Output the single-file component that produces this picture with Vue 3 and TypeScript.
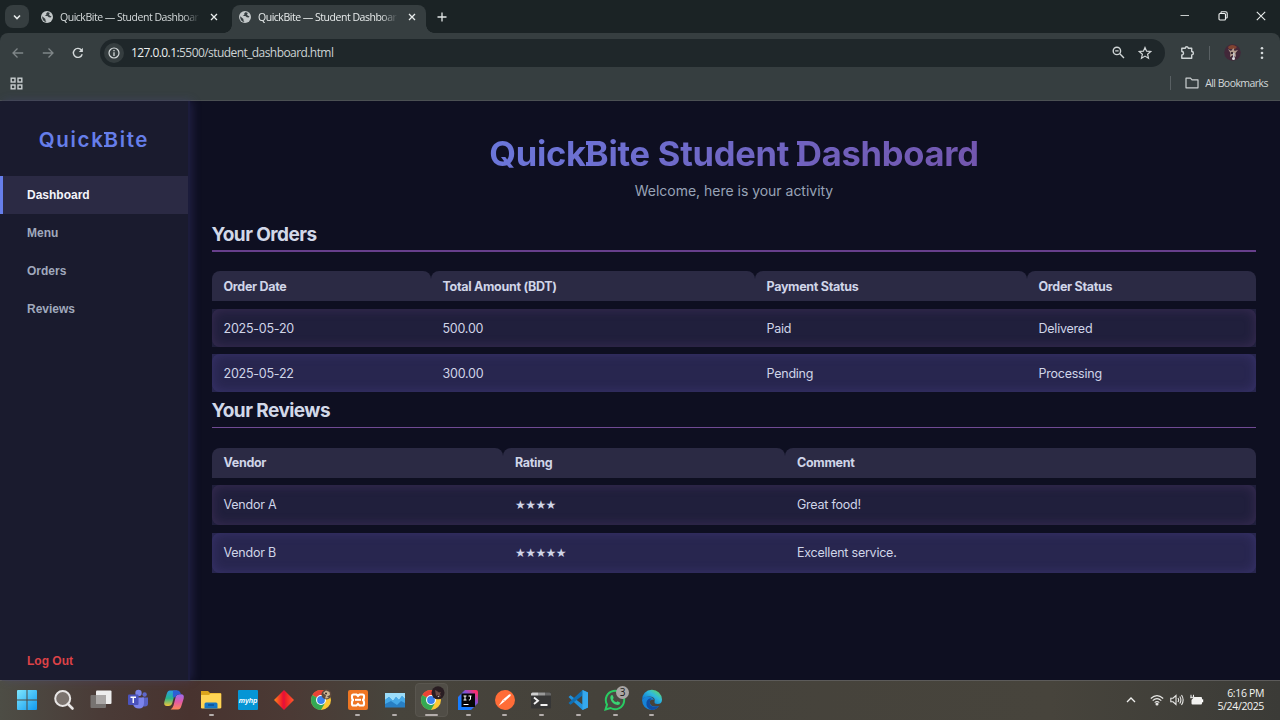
<script setup lang="ts">
interface Table {
  title: string
  kind: string
  head: string[]
  rows: string[][]
}

const nav: string[] = ['Dashboard', 'Menu', 'Orders', 'Reviews']

const tables: Table[] = [
  {
    title: 'Your Orders',
    kind: 'orders',
    head: ['Order Date', 'Total Amount (BDT)', 'Payment Status', 'Order Status'],
    rows: [
      ['2025-05-20', '500.00', 'Paid', 'Delivered'],
      ['2025-05-22', '300.00', 'Pending', 'Processing'],
    ],
  },
  {
    title: 'Your Reviews',
    kind: 'reviews',
    head: ['Vendor', 'Rating', 'Comment'],
    rows: [
      ['Vendor A', '★★★★', 'Great food!'],
      ['Vendor B', '★★★★★', 'Excellent service.'],
    ],
  },
]

interface App {
  id: string
  running?: boolean
  active?: boolean
}

const apps: App[] = [
  { id: 'start' },
  { id: 'search' },
  { id: 'tasks' },
  { id: 'teams' },
  { id: 'copilot' },
  { id: 'files', running: true },
  { id: 'myhp' },
  { id: 'diamond' },
  { id: 'chrome' },
  { id: 'xampp', running: true },
  { id: 'monitor', running: true },
  { id: 'chrome2', running: true, active: true },
  { id: 'idea', running: true },
  { id: 'postman', running: true },
  { id: 'terminal', running: true },
  { id: 'vscode', running: true },
  { id: 'whatsapp', running: true },
  { id: 'edge', running: true },
]
</script>

<template>
  <div class="screen">
    <header class="browser">
      <div class="tabstrip">
        <div class="tabsearch">
          <svg width="10" height="10" viewBox="0 0 10 10"><path d="M2 3.5 5 6.5 8 3.5" fill="none" stroke="#e6eaea" stroke-width="1.6" /></svg>
        </div>
        <div v-for="n in 2" :key="n" class="tab" :class="{ current: n === 2 }">
          <svg class="globe" width="12" height="12" viewBox="0 0 12 12">
            <circle cx="6" cy="6" r="6" fill="#c3c8c9" />
            <path d="M1.2 5.2 4.4 8v1.2l1 1.6C2.800 10.800 1 8.600 1.200 5.200zM6.300 1.300 5.200 2.500 5.400 3.800 3.800 5h2.600l1.400 1.300 1.800.2.900-1L8.600 4.600 8 3.100 9 2.200C8.200 1.500 7.300 1.200 6.300 1.300z" fill="#363e41" />
          </svg>
          <span class="tabtitle">QuickBite — Student Dashboard</span>
          <svg class="tabclose" width="8" height="8" viewBox="0 0 8 8"><path d="M1 1 7 7M7 1 1 7" stroke="#e8ecec" stroke-width="1.3" /></svg>
        </div>
        <svg class="newtab" width="10" height="10" viewBox="0 0 10 10"><path d="M5 .5v9M.5 5h9" stroke="#e3e7e7" stroke-width="1.3" /></svg>
        <div class="winbtns">
          <svg width="10" height="10" viewBox="0 0 10 10"><path d="M.5 4.500h8.500" stroke="#c8cccc" stroke-width="1" /></svg>
          <svg width="10" height="10" viewBox="0 0 10 10" fill="none" stroke="#f0f3f3" stroke-width="1.100"><rect x="1" y="2.500" width="6.500" height="6.500" rx="1" /><path d="M3 2V1.600Q3 .8 3.800.8H7.500Q9.200.8 9.200 2.500V6.200Q9.200 7 8.400 7H8" /></svg>
          <svg width="10" height="10" viewBox="0 0 10 10"><path d="M.8.8 9.200 9.200M9.200.8.8 9.200" stroke="#e8ecec" stroke-width="1.100" /></svg>
        </div>
      </div>
      <div class="toolbar">
        <svg class="nav-ic" width="12" height="12" viewBox="0 0 12 12"><path d="M11.200 6H1.200M5.500 1.500 1 6l4.500 4.500" fill="none" stroke="#7f8688" stroke-width="1.300" /></svg>
        <svg class="nav-ic" width="12" height="12" viewBox="0 0 12 12"><path d="M.8 6h10M6.500 1.500 11 6l-4.500 4.500" fill="none" stroke="#7f8688" stroke-width="1.300" /></svg>
        <svg class="nav-ic" width="12" height="12" viewBox="0 0 12 12"><path d="M10.200 7.200A4.500 4.500 0 1 1 9.500 3.200" fill="none" stroke="#d5dadb" stroke-width="1.400" /><path d="M10.900.8V5H6.800z" fill="#d5dadb" /></svg>
        <div class="omnibox">
          <div class="info">
            <svg width="12" height="12" viewBox="0 0 12 12"><circle cx="6" cy="6" r="5" fill="none" stroke="#d5dadb" stroke-width="1.200" /><path d="M6 5.300V9M6 3v1.300" stroke="#d5dadb" stroke-width="1.300" /></svg>
          </div>
          <span class="url"><b>127.0.0.1:</b>5500/student_dashboard.html</span>
          <svg class="zoomout" width="13" height="13" viewBox="0 0 13 13" fill="none" stroke="#d0d5d6" stroke-width="1.400"><circle cx="4.900" cy="4.900" r="3.700" /><path d="M7.800 7.800 12 12M3.200 4.900h3.400" /></svg>
          <svg class="bookmark" width="14" height="14" viewBox="0 0 14 14"><path d="M7 1.500 8.600 5.200 12.700 5.500 9.600 8.200 10.500 12.200 7 10.100 3.500 12.200 4.400 8.200 1.300 5.500 5.400 5.200z" fill="none" stroke="#d0d5d6" stroke-width="1.200" /></svg>
        </div>
        <svg class="puzzle" width="15" height="15" viewBox="0 0 15 15"><path d="M1.800 3.200H5.300A1.500 1.500 0 0 1 8.300 3.200H11.700V6.500A1.700 1.700 0 0 1 11.700 9.900V13.300H1.800V10A1.700 1.700 0 0 0 1.800 6.500z" fill="none" stroke="#d0d5d6" stroke-width="1.400" stroke-linejoin="round" /></svg>
        <i class="divider" />
        <svg class="avatar" width="17" height="17" viewBox="0 0 17 17">
          <circle cx="8.500" cy="8.500" r="8.300" fill="#422839" />
          <path d="M4 3Q8-1 13 3L11 5H5z" fill="#804331" /><path d="M4 5 7 7 9.500 4 10.500 7 14 6 11.500 9 12 13 9 11 6 13 6.500 9z" fill="#b39c8e" /><path d="M7 8h2v2H7z" fill="#3b2a32" /><circle cx="9.500" cy="14.500" r="1.500" fill="#dedde2" /><path d="M9 9h1.500v5H9z" fill="#c5c5ca" />
        </svg>
        <svg class="dots" width="4" height="14" viewBox="0 0 4 14" fill="#d5dadb"><circle cx="2" cy="2.300" r="1.300" /><circle cx="2" cy="7" r="1.300" /><circle cx="2" cy="11.700" r="1.300" /></svg>
      </div>
      <div class="bookmarks">
        <svg width="13" height="13" viewBox="0 0 13 13" fill="none" stroke="#c8cecf" stroke-width="1.400"><rect x="1.200" y="1.200" width="3.800" height="3.800" /><rect x="8" y="1.200" width="3.800" height="3.800" /><rect x="1.200" y="8" width="3.800" height="3.800" /><rect x="8" y="8" width="3.800" height="3.800" /></svg>
        <i class="divider bm" />
        <svg class="folder" width="14" height="12" viewBox="0 0 14 12"><path d="M1 1.200H5.500L7 2.800H13V10.800H1z" fill="none" stroke="#cbd0d1" stroke-width="1.200" stroke-linejoin="round" /></svg>
        <span class="allbm">All Bookmarks</span>
      </div>
    </header>

    <div class="page">
      <aside class="sidebar">
        <div class="brand">Quick<span class="slab">B</span>ite</div>
        <nav>
          <a v-for="(item, i) in nav" :key="item" :class="{ on: i === 0 }">{{ item }}</a>
        </nav>
        <a class="logout">Log Out</a>
      </aside>
      <main>
        <h1><span class="grad">Quick<span class="slab">B</span>ite Student <span class="slab late">D</span>ashboard</span></h1>
        <p class="welcome">Welcome, here is your activity</p>
        <section v-for="t in tables" :key="t.kind" :class="t.kind">
          <h2>{{ t.title }}</h2>
          <div class="row head">
            <div v-for="h in t.head" :key="h">{{ h }}</div>
          </div>
          <div v-for="r in t.rows" :key="r[0]" class="row body">
            <div v-for="c in r" :key="c" :class="{ stars: c[0] === '★' }">{{ c }}</div>
          </div>
        </section>
      </main>
    </div>

    <footer class="taskbar">
      <div class="apps">
        <div v-for="a in apps" :key="a.id" class="app" :class="{ running: a.running, active: a.active }">
          <svg width="24" height="24" viewBox="0 0 24 24">
            <defs>
              <linearGradient id="gWin" x1="0" y1="0" x2="1" y2="1"><stop offset="0" stop-color="#7ee6fd" /><stop offset="1" stop-color="#119af0" /></linearGradient>
              <linearGradient id="gDia"><stop offset="0" stop-color="#ff8a1c" /><stop offset=".42" stop-color="#f0182c" /><stop offset=".5" stop-color="#e01040" /><stop offset=".58" stop-color="#ee1f26" /><stop offset="1" stop-color="#ff5a2e" /></linearGradient>
              <linearGradient id="gCop1" x1="0" y1="0" x2="0" y2="1"><stop offset="0" stop-color="#2a9de8" /><stop offset=".5" stop-color="#27b58c" /><stop offset="1" stop-color="#f3c63a" /></linearGradient>
              <linearGradient id="gCop2" x1="0" y1="0" x2="0" y2="1"><stop offset="0" stop-color="#9b6cf0" /><stop offset=".5" stop-color="#e25aa5" /><stop offset="1" stop-color="#ff8a55" /></linearGradient>
              <linearGradient id="gIdea" x1="0" y1="1" x2="1" y2="0"><stop offset=".3" stop-color="#167dff" /><stop offset=".65" stop-color="#8a4fd0" /><stop offset=".9" stop-color="#fe2d6c" /></linearGradient>
              <linearGradient id="gEdge" x1="0" y1="1" x2="1" y2="0"><stop offset=".2" stop-color="#0d78d2" /><stop offset=".6" stop-color="#2fb9dd" /><stop offset=".9" stop-color="#61d764" /></linearGradient>
            </defs>
            <g v-if="a.id === 'start'" fill="url(#gWin)"><path d="M2 3Q2 2 3 2H11.500V11.500H2zM12.500 2H21Q22 2 22 3V11.500H12.500zM2 12.500H11.500V22H3Q2 22 2 21zM12.500 12.500H22V21Q22 22 21 22H12.500z" /></g>
            <g v-else-if="a.id === 'search'" fill="#7b736e" stroke="#e8e6e5" stroke-width="2"><circle cx="10.700" cy="10.500" r="7.500" /><path d="M16 16 20.500 20.500" stroke-width="2.600" stroke-linecap="round" /></g>
            <g v-else-if="a.id === 'tasks'"><rect x="7" y="2.500" width="15.500" height="13.500" rx="1" fill="#ededed" /><rect x="1.500" y="7" width="15.500" height="13" rx="1" fill="#777371" /><path d="M7 7h10v9H7z" fill="#aaa7a6" /></g>
            <g v-else-if="a.id === 'teams'"><circle cx="12.500" cy="5" r="3.200" fill="#7a83e8" /><circle cx="18.600" cy="6.500" r="2.200" fill="#5e67c9" /><path d="M16 9.500h6v6q0 3-3 3h-3z" fill="#5961c4" /><path d="M7 9.500H18V15Q18 20.500 13 20.500Q8 20.500 7 16z" fill="#7b83eb" /><rect x="2" y="6.500" width="10.500" height="10.500" rx="1" fill="#4b53bc" /><path d="M4.500 9.200h5.500M7.250 9.200v5.800" stroke="#fff" stroke-width="1.400" /></g>
            <g v-else-if="a.id === 'copilot'"><path d="M8 2.500H15.500Q13.500 3.500 12.500 6.500L10.300 15Q9.500 18 6.500 18H5Q1.500 18 2.300 14L4.500 6.500Q5.500 2.500 8 2.500z" fill="url(#gCop1)" /><path d="M16 21.500H8.500Q10.500 20.500 11.500 17.500L13.700 9Q14.500 6.300 17.500 6.300H19Q22.500 6.300 21.700 10.500L19.500 17.500Q18.500 21.500 16 21.500z" fill="url(#gCop2)" /><path d="M11 2.500H15.500Q18 2.500 19 6.300H17Q14 6.800 13.200 9.500L10.800 9z" fill="#2b60d5" /></g>
            <g v-else-if="a.id === 'files'"><path d="M2 3H9L11 5H21Q22.200 5 22.200 6V20H2z" fill="#dca51c" /><path d="M2 7H10L11.500 5.500H22.200V19.500Q22.200 20.500 21 20.500H3Q2 20.500 2 19.500z" fill="#ffd454" /><path d="M5.500 20.500V16Q5.500 14.500 7 14.500H17Q18.500 14.500 18.500 16V20.500z" fill="#1676c4" /><path d="M9 17h6" stroke="#0c4d91" stroke-width="1.400" /></g>
            <g v-else-if="a.id === 'myhp'"><rect x="2" y="2" width="20" height="20" rx="1" fill="#0595d5" /><text x="12" y="14.500" class="hp">myhp</text></g>
            <path v-else-if="a.id === 'diamond'" d="M12 2 22 12 12 22 2 12z" fill="url(#gDia)" />
            <g v-else-if="a.id === 'chrome' || a.id === 'chrome2'">
              <circle cx="12" cy="12" r="10" fill="#fcc934" /><path d="M12 12 3.340 7A10 10 0 0 1 20.660 7H12z" fill="#ea4335" /><path d="M12 12 3.340 7A10 10 0 0 0 12 22L16.300 14.500z" fill="#34a853" /><circle cx="12" cy="12" r="5" fill="#fff" /><circle cx="12" cy="12" r="3.900" fill="#3a82ee" />
              <g v-if="a.id === 'chrome'"><circle cx="17.500" cy="6.500" r="5" fill="#5b493e" /><path d="M14 5 17 2.500 20.500 4 21 7 18 8.500 20 10 16 10.500 17 7.500z" fill="#ccb494" /><circle cx="17" cy="5.500" r="1" fill="#352b27" /></g>
              <g v-else><circle cx="19" cy="4.800" r="6.500" fill="#291d22" /><path d="M16 2 18 3 20 4.500 22 4 21 6 22 8.500 19 7 17 8z" fill="#6b4b45" /><circle cx="19.500" cy="8.500" r=".8" fill="#c1b8ba" /></g>
            </g>
            <g v-else-if="a.id === 'xampp'"><rect x="2" y="2" width="20" height="20" rx="2" fill="#ef7623" /><path d="M7.500 6.500H10.500L12 8 13.500 6.500H16.500Q18 6.500 18 8V9.500Q18 12 16 12Q18 12 18 14.500V16Q18 17.500 16.500 17.500H13.500L12 16 10.500 17.500H7.500Q6 17.500 6 16V14.500Q6 12 8 12Q6 12 6 9.500V8Q6 6.500 7.500 6.500z" fill="none" stroke="#fff" stroke-width="2.100" /><path d="M9 11.800h6" stroke="#fff" stroke-width="2" /></g>
            <g v-else-if="a.id === 'monitor'"><path d="M2 5H22V19.500H2z" fill="#287fc4" /><path d="M2 5H22V11L19 8 16 12 13 9 10 13 6 9 2 12z" fill="#9bdcf9" /><path d="M2 12 6 9 10 13 13 9 16 12 19 8 22 11V15L18 13 14 17 8 13 2 16z" fill="#45a9e8" /></g>
            <g v-else-if="a.id === 'idea'"><path d="M2 9 9 2H20Q22 2 22 4V15L15 22H2z" fill="url(#gIdea)" /><rect x="5.500" y="5.500" width="13.500" height="13.500" fill="#050507" /><path d="M7.500 8h3M9 8v4M7.500 12h3M12.500 8h3M14.500 8v3.200q0 1-1.700.8M7.500 16.500h5" stroke="#fff" stroke-width="1" fill="none" /></g>
            <g v-else-if="a.id === 'postman'"><circle cx="12" cy="12" r="10" fill="#ff6c37" /><path d="M5.500 18 10 11.500 16 6.500Q18.500 5.500 17.500 8L11.500 13.500z" fill="#fff" /><path d="M10 11.500 12 13.500" stroke="#ff6c37" stroke-width=".7" /></g>
            <g v-else-if="a.id === 'terminal'"><rect x="2" y="4.500" width="20" height="16" rx="1" fill="#363636" /><path d="M2 7.500V6Q2 4.500 3.500 4.500H9V7.500z" fill="#cfcfcf" /><path d="M9 4.500h7v3H9z" fill="#999" /><path d="M16 4.500h4.500Q22 4.500 22 6v1.500h-6z" fill="#666" /><path d="M5 9.500 9 12.700 5 16M11.500 17h7" fill="none" stroke="#f2f2f2" stroke-width="1.900" /></g>
            <g v-else-if="a.id === 'vscode'"><path d="M16.500 2 22 4.500V19.500L16.500 22 2.500 9 4.500 7.300 16.500 16.500z" fill="#2292dc" /><path d="M16.500 2V7.500L4.500 16.700 2.500 15z" fill="#0f70b6" /><path d="M16.500 2 22 4.500V19.500L16.500 22z" fill="#35a8ee" /></g>
            <g v-else-if="a.id === 'whatsapp'"><path d="M2.500 21.500 4 16.500A9.200 9.200 0 1 1 7.500 20z" fill="#4a4942" stroke="#29cc62" stroke-width="2" /><path d="M8 7.500Q9.500 6.500 10 8L10.700 10 9.800 11.200Q11 13.500 13.300 14.300L14.500 13.300 17 14.500Q17 17 14.500 17Q8.500 16 7.300 10Q7.200 8.500 8 7.500z" fill="#39d373" /><circle cx="19.500" cy="4.500" r="6.500" fill="#a8a5a4" /><text x="19.500" y="8" class="badge">3</text></g>
            <g v-else><path d="M2 12A10 10 0 0 1 22 11.500Q22 16 17.500 16Q14 16 14.500 13.500Q15.500 10 11.500 8.800Q6 7.500 2 12z" fill="url(#gEdge)" /><path d="M2 12Q5 7.800 10 8.800Q13.500 9.500 13.800 12Q10 10.500 9.800 14.500Q10.500 20 19 18Q16 22 11.500 22Q2.500 21 2 12z" fill="#1683d8" /><path d="M9.800 14.500Q9.500 20 19 18.300Q16 22 11.500 22Q5.500 20 6.500 14Q7.500 10.500 11.500 10.200Q9.800 12 9.800 14.500z" fill="#114da2" /></g>
          </svg>
        </div>
      </div>
      <div class="tray">
        <svg width="10" height="8" viewBox="0 0 10 8"><path d="M1 6 5 2 9 6" fill="none" stroke="#f0f0ee" stroke-width="1.300" /></svg>
        <svg class="wifi" width="14" height="12" viewBox="0 0 14 12" fill="none" stroke="#e8e8e6" stroke-width="1.100"><path d="M.8 4.500Q7-1.200 13.200 4.500M2.700 6.600Q7 2.700 11.300 6.600M4.700 8.600Q7 6.400 9.300 8.600" /><circle cx="7" cy="10" r="1" fill="#fff" /></svg>
        <svg class="sound" width="14" height="12" viewBox="0 0 14 12" fill="none" stroke="#e8e8e6" stroke-width="1.100"><path d="M.8 4.200H3L6 1.500V10.500L3 7.800H.8zM8 4Q9.300 6 8 8M9.800 2.500Q12 6 9.800 9.500M11.500 1Q14.800 6 11.500 11" /></svg>
        <svg width="14" height="12" viewBox="0 0 14 12"><path d="M4 3H11Q12 3 12 4V9.500Q12 10.500 11 10.500H2.500Q1.500 10.500 1.500 9.500V6z" fill="#f2f2f0" /><path d="M12.500 5.300v3" stroke="#fff" stroke-width="1.400" /><path d="M1 .8v3.500M3.500.8v2.500M.5 3.300h4" stroke="#eee" stroke-width="1" /></svg>
        <div class="clock"><span>6:16 PM</span><span>5/24/2025</span></div>
      </div>
    </footer>
  </div>
</template>

<style>
html, body { background: #0e0f21; overflow: hidden; }
</style>

<style scoped>
* { box-sizing: border-box; }
.screen { width: 1280px; height: 720px; display: flex; flex-direction: column; overflow: hidden; font-family: Inter, "Liberation Sans", sans-serif; }
svg { display: block; flex: none; }

.browser { height: 101px; background: #1b2325; border-bottom: 1px solid #4b5053; font-family: "Open Sans", "Noto Sans", sans-serif; flex: none; }
.tabstrip { height: 33px; display: flex; align-items: flex-start; padding-left: 5px; }
.tabsearch { width: 24px; height: 23px; margin: 5px 2px 0 0; border-radius: 8px; background: #363e40; display: flex; align-items: center; justify-content: center; }
.tab { position: relative; width: 198px; height: 28px; margin-top: 5px; padding: 0 9px 5px 10px; display: flex; align-items: center; }
.tab + .tab { margin-left: 3px; width: 194px; padding-left: 7px; }
.tab.current { background: #363e40; border-radius: 8px 8px 0 0; }
.tab.current::before, .tab.current::after { content: ""; position: absolute; bottom: 0; width: 8px; height: 8px; }
.tab.current::before { left: -8px; background: radial-gradient(circle at 0 0, transparent 7.5px, #363e40 8px); }
.tab.current::after { right: -8px; background: radial-gradient(circle at 100% 0, transparent 7.5px, #363e40 8px); }
.tabtitle { width: 139px; margin: 0 10.5px 0 7px; overflow: hidden; white-space: nowrap; font-size: 10.5px; letter-spacing: -0.48px; color: #d6dbdc; -webkit-mask-image: linear-gradient(90deg, #000 122px, transparent 140px); mask-image: linear-gradient(90deg, #000 122px, transparent 140px); }
.current .tabtitle { color: #e8ecec; }
.newtab { margin: 12px 0 0 11px; }
.winbtns { margin: 11px 14px 0 auto; display: flex; gap: 28px; }

.toolbar { height: 39px; background: #363e40; border-radius: 8px 8px 0 0; display: flex; align-items: center; padding-left: 12px; }
.nav-ic { margin-right: 18px; }
.nav-ic:nth-child(3) { margin-right: 16px; }
.omnibox { width: 1065px; height: 28px; border-radius: 14px; background: #1f272a; display: flex; align-items: center; padding-left: 4px; }
.info { width: 20px; height: 20px; border-radius: 50%; background: #353d3f; display: flex; align-items: center; justify-content: center; }
.url { margin-left: 7px; font-size: 12px; letter-spacing: -0.57px; color: #cdd3d4; }
.url b { font-weight: 400; color: #edf0f0; }
.zoomout { margin-left: auto; }
.bookmark { margin: 0 13px; }
.puzzle { margin-left: 15px; }
.divider { width: 1px; height: 14px; background: #596063; margin: 0 14px; }
.dots { margin-left: 19px; }
.bookmarks { height: 28px; background: #363e40; display: flex; align-items: center; padding: 0 12px 6px 10px; }
.divider.bm { margin: 0 14px 0 auto; }
.folder { margin-right: 6px; }
.allbm { font-size: 10.5px; letter-spacing: -0.55px; color: #d3d8d9; }

.page { height: 579px; display: flex; background: #0e0f21; flex: none; }
.sidebar { position: relative; z-index: 1; width: 188px; background: #1a1b2e; box-shadow: 2px 0 1px #1c1c3b, 4px 0 9px rgba(78, 76, 155, .3); display: flex; flex-direction: column; font-family: "Liberation Sans", Arial, sans-serif; font-weight: 700; font-size: 12px; }
.brand { height: 75px; text-align: center; font: 600 20.5px/77px Inter, sans-serif; letter-spacing: 1.65px; color: #667eea; }
.slab::before { content: ""; display: inline-block; box-sizing: border-box; width: 3px; height: 15px; margin: 0 -3px 0 0; border: solid #667eea; border-width: 2.5px 0; }
.grad .slab::before { width: 5px; height: 25px; margin: 0 -5px 0 0; border-color: #6c70d8; border-width: 4px 0; }
.grad .late::before { border-color: #7161c2; }
nav a, .logout { display: block; height: 38px; line-height: 38px; padding-left: 27px; color: #a0a9bd; }
nav a.on { color: #f4f4fa; background: #2b2a44; border-left: 3px solid #667eea; padding-left: 24px; }
.logout { margin-top: auto; color: #dd4247; }

main { flex: 1; padding: 32px 24px 0; display: flex; flex-direction: column; color: #d0d5e8; }
h1 { margin: 0; height: 42px; line-height: 42px; text-align: center; font-size: 34.5px; font-weight: 650; letter-spacing: -0.25px; white-space: nowrap; }
.grad { display: inline-block; color: transparent; background: linear-gradient(135deg, #6b78dc, #7355ad); -webkit-background-clip: text; background-clip: text; }
.welcome { margin: 6px 0 0; height: 20px; line-height: 20px; text-align: center; font-size: 14px; letter-spacing: -0.02px; color: #98a3b7; }
h2 { margin: 0 0 19px -0.5px; height: 32px; line-height: 29px; font-size: 19px; font-weight: 700; letter-spacing: -0.55px; color: #d2d8e8; border-bottom: 2px solid #673f8c; }
.orders { margin-top: 19px; }
.reviews { margin-top: 4px; }
.reviews h2 { border-bottom: 1px solid #704a94; margin-bottom: 20px; }
.row { display: grid; margin: 0 0 0 -0.5px; }
.orders .row { grid-template-columns: 219px 324px 272px 1fr; }
.reviews .row { grid-template-columns: 291.500px 282px 1fr; }
.row > div { padding-left: 12px; font-size: 12.500px; letter-spacing: -0.23px; }
.row.head > div { height: 30px; line-height: 30px; border-radius: 8px 8px 0 0; background: #2b2a44; font-weight: 700; letter-spacing: -0.3px; }
.body { position: relative; margin-top: 8px; background: #201f3c; }
.body::before { content: ""; position: absolute; inset: 0; border-radius: 8px; box-shadow: inset 0 0 12px rgba(118, 75, 140, .3); }
.body + .body { background: #28264f; }
.body + .body::before { box-shadow: inset 0 0 12px rgba(95, 82, 175, .3); }
.orders .row.head > div { line-height: 32px; }
.orders .body > div { height: 38px; line-height: 39px; }
.orders .body + .body { margin-top: 7px; }
.reviews .body { margin-top: 7px; }
.reviews .body + .body { margin-top: 8px; }
.reviews .body > div { height: 40px; line-height: 40px; }
.row > .stars { font-family: "DejaVu Sans", sans-serif; font-size: 12px; letter-spacing: -0.55px; }

.taskbar { height: 40px; flex: none; display: flex; border-top: 1px solid #5c5b5a; background: linear-gradient(90deg, #4d4d45 0, #4a3b37 100px, #48332f 190px, #4b3a35 290px, #47443c 390px, #45423b 600px, #47443c 1050px, #3b3b37 1280px); }
.apps { display: flex; padding-left: 9px; }
.app { position: relative; width: 36.730px; height: 38px; display: flex; align-items: center; justify-content: center; }
.app svg { position: relative; overflow: visible; }
.running::after { content: ""; position: absolute; bottom: 3px; left: 16px; width: 5px; height: 2px; border-radius: 1px; background: #b4aeac; }
.active::after { left: 12px; width: 13px; }
.active::before { content: ""; position: absolute; inset: 2px 2px 2px; border-radius: 4px; background: #504d46; border: 1px solid #59564f; }
.hp { font: italic 700 7px "Liberation Sans", sans-serif; fill: #fff; text-anchor: middle; }
.badge { font: 10px "Open Sans", sans-serif; fill: #171717; text-anchor: middle; }
.tray { margin-left: auto; height: 38px; display: flex; align-items: center; padding-right: 16px; }
.wifi { margin-left: 14px; }
.sound { margin: 0 6px; }
.clock { width: 60px; display: flex; flex-direction: column; text-align: right; font: 10.500px/13px "Open Sans", sans-serif; letter-spacing: -0.35px; color: #f4f4f2; }
</style>
